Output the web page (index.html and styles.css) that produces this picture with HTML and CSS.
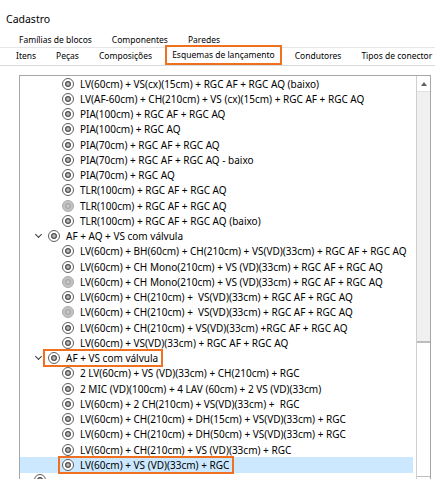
FILE: index.html
```html
<!DOCTYPE html>
<html lang="pt-BR">
<head>
    <meta charset="UTF-8">
    <meta name="viewport" content="width=device-width, initial-scale=1.0">
    <title>Cadastro</title>
    <link rel="stylesheet" href="styles.css">
</head>
<body>
    <div class="title">Cadastro</div>

    <div class="tabs">
        <div class="tab-row back">
            <span class="tab">Famílias de blocos</span>
            <span class="tab">Componentes</span>
            <span class="tab">Paredes</span>
        </div>
        <div class="tab-row front">
            <span class="tab">Itens</span>
            <span class="tab">Peças</span>
            <span class="tab">Composições</span>
            <span class="tab active">Esquemas de lançamento</span>
            <span class="tab">Condutores</span>
            <span class="tab">Tipos de conector</span>
        </div>
    </div>

    <div class="listbox">
        <ul class="tree">
            <li class="item"><span class="lbl"><i class="ico"></i>LV(60cm) + VS(cx)(15cm) + RGC AF + RGC AQ (baixo)</span></li>
            <li class="item"><span class="lbl"><i class="ico"></i>LV(AF-60cm) + CH(210cm) + VS (cx)(15cm) + RGC AF + RGC AQ</span></li>
            <li class="item"><span class="lbl"><i class="ico"></i>PIA(100cm) + RGC AF + RGC AQ</span></li>
            <li class="item"><span class="lbl"><i class="ico"></i>PIA(100cm) + RGC AQ</span></li>
            <li class="item"><span class="lbl"><i class="ico"></i>PIA(70cm) + RGC AF + RGC AQ</span></li>
            <li class="item"><span class="lbl"><i class="ico"></i>PIA(70cm) + RGC AF + RGC AQ - baixo</span></li>
            <li class="item"><span class="lbl"><i class="ico"></i>PIA(70cm) + RGC AQ</span></li>
            <li class="item"><span class="lbl"><i class="ico"></i>TLR(100cm) + RGC AF + RGC AQ</span></li>
            <li class="item"><span class="lbl"><i class="ico off"></i>TLR(100cm) + RGC AF + RGC AQ</span></li>
            <li class="item"><span class="lbl"><i class="ico"></i>TLR(100cm) + RGC AF + RGC AQ (baixo)</span></li>

            <li class="group"><i class="chevron"></i><span class="lbl"><i class="ico"></i>AF + AQ + VS com válvula</span></li>
            <li class="item"><span class="lbl"><i class="ico"></i>LV(60cm) + BH(60cm) + CH(210cm) + VS(VD)(33cm) + RGC AF + RGC AQ</span></li>
            <li class="item"><span class="lbl"><i class="ico"></i>LV(60cm) + CH Mono(210cm) + VS (VD)(33cm) + RGC AF + RGC AQ</span></li>
            <li class="item"><span class="lbl"><i class="ico off"></i>LV(60cm) + CH Mono(210cm) + VS (VD)(33cm) + RGC AF + RGC AQ</span></li>
            <li class="item"><span class="lbl"><i class="ico"></i>LV(60cm) + CH(210cm) +  VS(VD)(33cm) + RGC AF + RGC AQ</span></li>
            <li class="item"><span class="lbl"><i class="ico off"></i>LV(60cm) + CH(210cm) +  VS(VD)(33cm) + RGC AF + RGC AQ</span></li>
            <li class="item"><span class="lbl"><i class="ico"></i>LV(60cm) + CH(210cm) + VS(VD)(33cm) +RGC AF + RGC AQ</span></li>
            <li class="item"><span class="lbl"><i class="ico"></i>LV(60cm) + VS(VD)(33cm) + RGC AF + RGC AQ</span></li>

            <li class="group"><i class="chevron"></i><span class="lbl mark"><i class="ico"></i>AF + VS com válvula</span></li>
            <li class="item"><span class="lbl"><i class="ico"></i>2 LV(60cm) + VS (VD)(33cm) + CH(210cm) + RGC</span></li>
            <li class="item"><span class="lbl"><i class="ico"></i>2 MIC (VD)(100cm) + 4 LAV (60cm) + 2 VS (VD)(33cm)</span></li>
            <li class="item"><span class="lbl"><i class="ico"></i>LV(60cm) + 2 CH(210cm) + VS(VD)(33cm) +  RGC</span></li>
            <li class="item"><span class="lbl"><i class="ico"></i>LV(60cm) + CH(210cm) + DH(15cm) + VS(VD)(33cm) + RGC</span></li>
            <li class="item"><span class="lbl"><i class="ico"></i>LV(60cm) + CH(210cm) + DH(50cm) + VS(VD)(33cm) + RGC</span></li>
            <li class="item"><span class="lbl"><i class="ico"></i>LV(60cm) + CH(210cm) + VS (VD)(33cm) + RGC</span></li>
            <li class="item selected"><span class="lbl mark"><i class="ico"></i>LV(60cm) + VS (VD)(33cm) + RGC</span></li>

            <li class="root"><i class="ico"></i></li>
        </ul>

        <div class="scrollbar">
            <div class="arrow up"></div>
            <div class="thumb"></div>
            <div class="track"></div>
            <div class="arrow down"></div>
        </div>
    </div>
</body>
</html>
```

FILE: styles.css
```css
body {
    margin: 0;
    height: 479px;
    overflow: hidden;
    background: #fff;
    color: #000;
    font-family: "Noto Sans", "Open Sans", sans-serif;
    font-size: 10px;
}

.title {
    box-sizing: border-box;
    height: 32px;
    padding: 13px 0 0 6px;
    line-height: 13px;
    font-size: 10.5px;
}

/* tab strip, two rows like the windows tab control */
.tabs {
    font-size: 8.5px;
}

.tab-row {
    display: flex;
    white-space: nowrap;
    overflow: hidden;
}

.tab-row.back {
    height: 15px;
    line-height: 15px;
    padding-left: 9px;
}

.tab-row.front {
    height: 18px;
    line-height: 18px;
    padding-left: 6px;
    padding-top: 2px;
    margin-top: -2px;
    border-bottom: 1px solid #d9d9d9;
    background: linear-gradient(#fff 2px, #e6e6e6 2px, #e6e6e6 3px, #fff 3px);
}

.tab {
    padding: 0 10px;
}

.tab.active {
    box-sizing: border-box;
    height: 20px;
    line-height: 16px;
    margin: -2px 3px 0;
    padding: 0 5px;
    border: 2px solid #f07020;
    background: #fff;
}

/* list of schemes */
.listbox {
    display: flex;
    height: 420px;
    margin: 9px 4px 0 19px;
    border: 1px solid #a6a6a6;
    border-bottom: none;
}

.tree {
    flex: 1;
    margin: 0;
    padding: 0;
    list-style: none;
}

.tree li {
    display: flex;
    align-items: center;
    height: 15.25px;
    white-space: pre;
}

.item {
    padding-left: 40px;
}

.group {
    padding-left: 15px;
}

.root {
    padding-left: 14px;
}

.lbl {
    display: inline-flex;
    align-items: center;
    gap: 6px;
    height: 14px;
    padding: 0 3px 0 2px;
}

.group .lbl {
    margin-left: 3px;
    padding-left: 3px;
}

.item.selected {
    background: #cce8ff;
    margin-right: 3px;
}

.mark {
    outline: 2px solid #f07020;
}

.ico {
    box-sizing: border-box;
    width: 12px;
    height: 12px;
    border: 1.3px solid #5e5e5e;
    border-radius: 50%;
    background: radial-gradient(circle, #b9b9b9 0 1.4px, #5a5a5a 1.8px 2.8px, #fff 3.2px);
}

.ico.off {
    border-color: #a8a8a8;
    background: radial-gradient(circle, #c9c9c9 0 1.4px, #a9a9a9 1.8px 2.8px, #c4c4c4 3.2px);
}

.chevron {
    box-sizing: border-box;
    width: 5px;
    height: 5px;
    margin: -3px 1px 0;
    border-right: 1.3px solid #3a3a3a;
    border-bottom: 1.3px solid #3a3a3a;
    transform: rotate(45deg);
}

/* classic scrollbar */
.scrollbar {
    display: flex;
    flex-direction: column;
    width: 13px;
    border-left: 1px solid #cfcfcf;
}

.arrow {
    height: 15px;
    display: flex;
    align-items: center;
    justify-content: center;
}

.arrow.up::before {
    content: "";
    border-left: 3.5px solid transparent;
    border-right: 3.5px solid transparent;
    border-bottom: 4px solid #606060;
}

.arrow.down {
    border-top: 1px solid #bdbdbd;
}

.thumb {
    height: 249px;
    background: #f0f0f0;
    border-top: 1px solid #e2e2e2;
    border-bottom: 2px solid #bcbcbc;
}

.track {
    height: 133px;
}
```
